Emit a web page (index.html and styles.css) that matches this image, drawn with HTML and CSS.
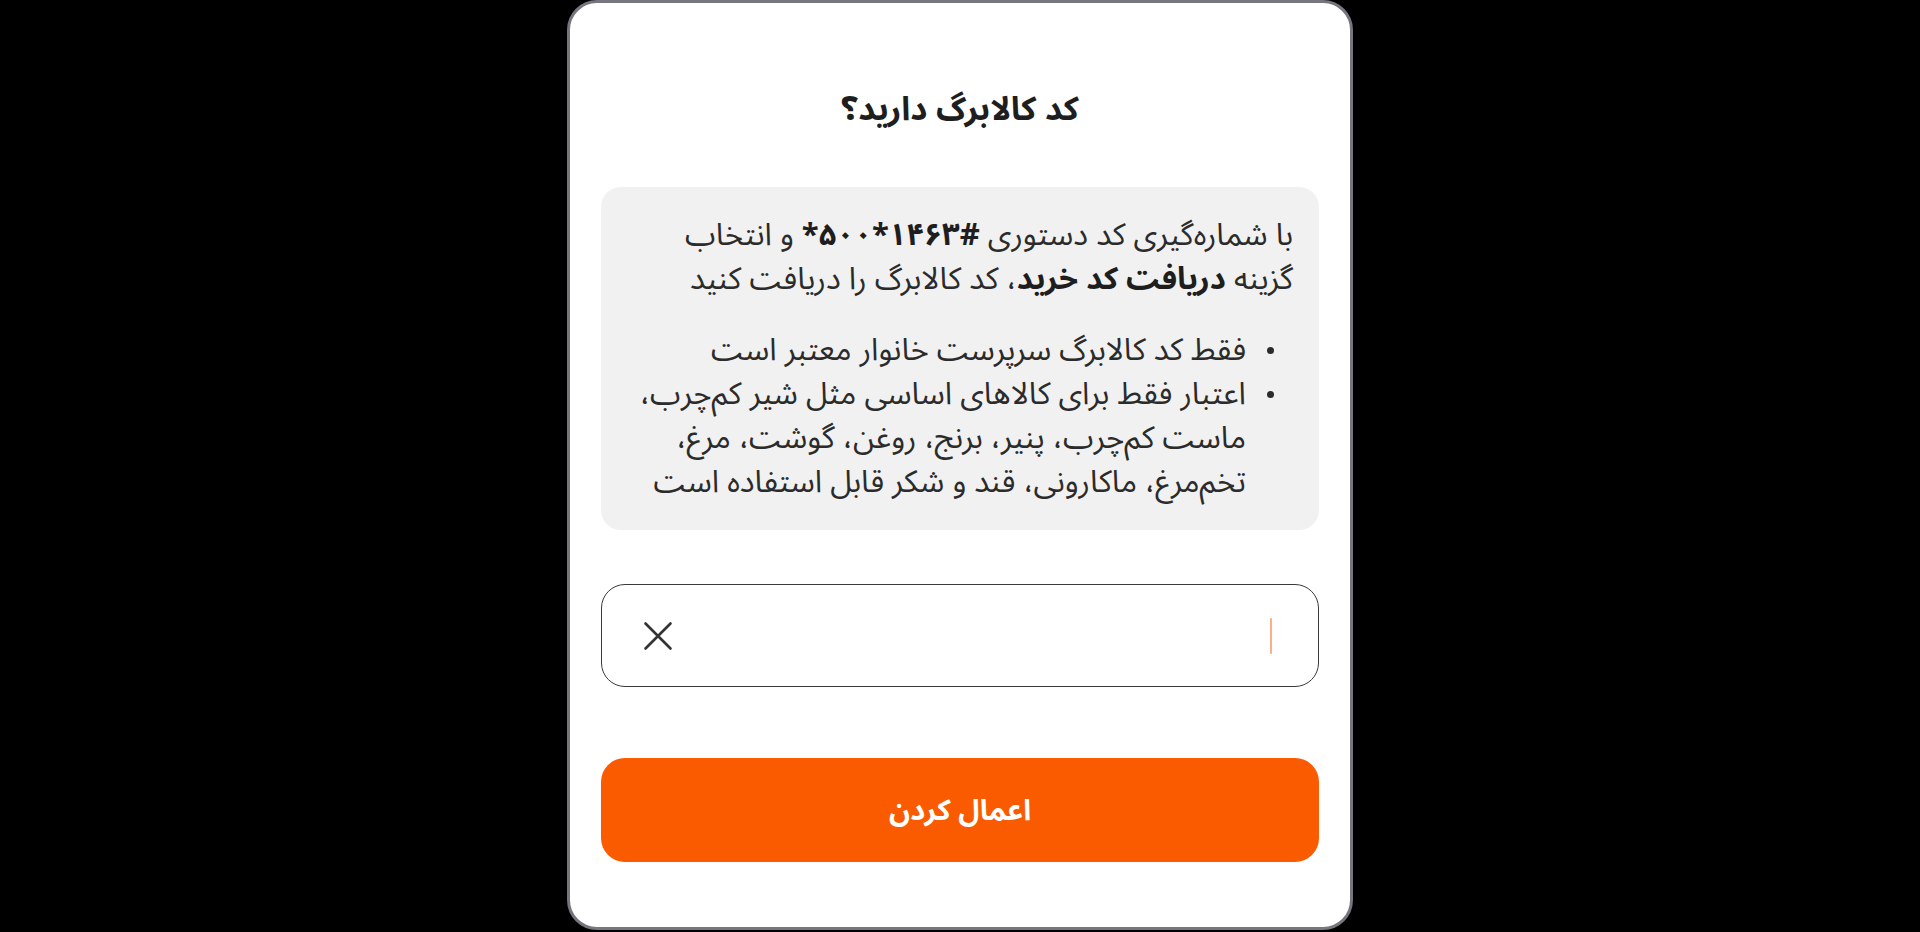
FILE: index.html
```html
<!DOCTYPE html>
<html lang="fa" dir="rtl">
<head>
<meta charset="utf-8">
<title>کد کالابرگ</title>
<link rel="stylesheet" href="styles.css">
</head>
<body>
<div class="stage">
  <div class="card">
    <h1 class="title">کد کالابرگ دارید؟</h1>
    <div class="info">
      <p class="lead">با شماره‌گیری کد دستوری <bdi class="code" dir="ltr">*۵۰۰*۱۴۶۳#</bdi> و انتخاب<br>گزینه <b>دریافت کد خرید</b>، کد کالابرگ را دریافت کنید</p>
      <ul class="rules">
        <li><span>فقط کد کالابرگ سرپرست خانوار معتبر است</span></li>
        <li><span>اعتبار فقط برای کالاهای اساسی مثل شیر کم‌چرب،<br>ماست کم‌چرب، پنیر، برنج، روغن، گوشت، مرغ،<br>تخم‌مرغ، ماکارونی، قند و شکر قابل استفاده است</span></li>
      </ul>
    </div>
    <div class="field">
      <span class="caret"></span>
      <svg class="clear" width="30" height="30" viewBox="0 0 30 30" aria-hidden="true">
        <path d="M2.5 2.5 L27.5 27.5 M27.5 2.5 L2.5 27.5" fill="none" stroke="#333" stroke-width="2.6" stroke-linecap="round"/>
      </svg>
    </div>
    <button class="apply" type="button">اعمال کردن</button>
  </div>
</div>
</body>
</html>
```
FILE: styles.css
```css
* { box-sizing: border-box; }
html, body { margin: 0; padding: 0; height: 100%; }
body {
  background: #000;
  font-family: "Noto Sans Arabic", "DejaVu Sans", sans-serif;
  color: #2b2b2b;
  overflow: hidden;
}
.stage {
  display: flex;
  justify-content: center;
}
.card {
  width: 786px;
  height: 930px;
  background: #fff;
  border: 3px solid #76767f;
  border-radius: 30px;
  padding: 87px 31px 0 31px;
  display: flex;
  flex-direction: column;
}
.title {
  margin: 0 0 57px;
  font-size: 33px;
  line-height: 40px;
  font-weight: 700;
  color: #1e1e1e;
  text-align: center;
}
.info {
  background: #f1f1f1;
  border-radius: 20px;
  padding: 26px;
  font-size: 31px;
  line-height: 44px;
  color: #2b2b2b;
}
.lead { margin: 0 0 27px; white-space: nowrap; }
.lead b, .code { font-weight: 700; color: #1e1e1e; }
.code { unicode-bidi: isolate; }
.rules { margin: 0; padding: 0; list-style: none; white-space: nowrap; }
.rules li { display: flex; align-items: flex-start; }
.rules li::before {
  content: "";
  flex: 0 0 7px;
  height: 7px;
  border-radius: 50%;
  background: #2b2b2b;
  margin: 19px 19px 0 21px;
}
.field {
  margin-top: 54px;
  height: 103px;
  border: 1.5px solid #3a3a3a;
  border-radius: 24px;
  display: flex;
  align-items: center;
  justify-content: space-between;
  padding: 0 46px 0 41px;
}
.caret {
  width: 2px;
  height: 36px;
  background: #fcae86;
  border-radius: 1px;
}
.clear { display: block; }
.apply {
  margin-top: 71px;
  height: 104px;
  border: 0;
  border-radius: 24px;
  background: #fa5a00;
  color: #fff;
  font-family: inherit;
  font-size: 29px;
  font-weight: 700;
}
```
